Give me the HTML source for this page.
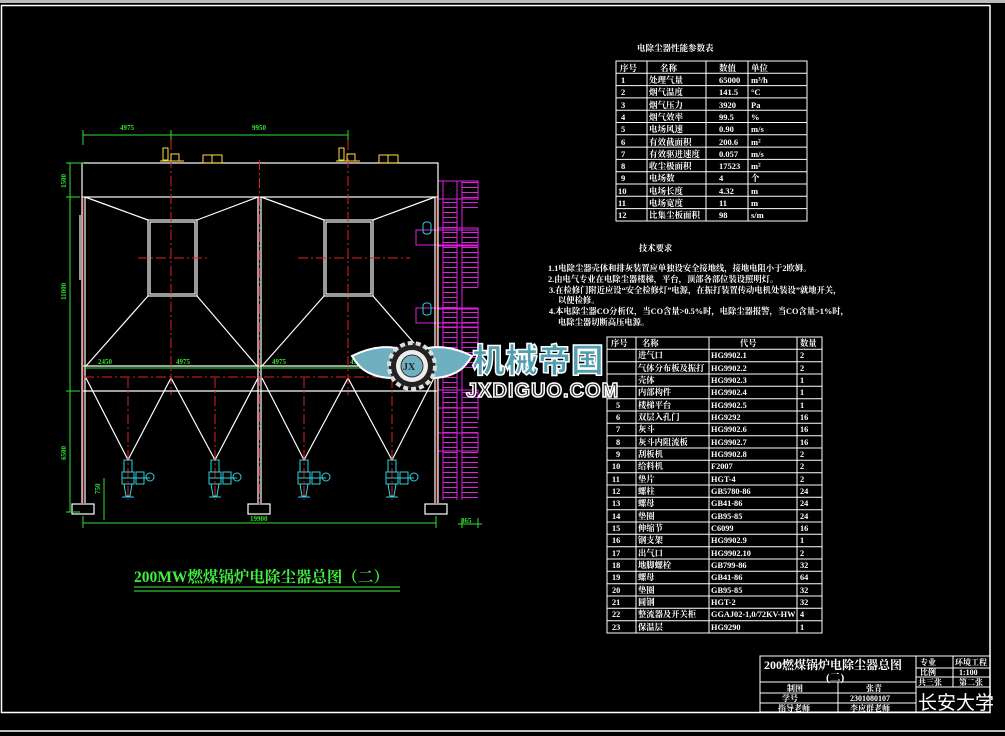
<!DOCTYPE html>
<html><head><meta charset="utf-8"><style>
html,body{margin:0;padding:0;background:#000;width:1005px;height:736px;overflow:hidden}
svg{display:block}
text{font-family:"Liberation Serif","Noto Serif CJK SC",serif;fill:#fff;font-weight:bold}
text.g{fill:#30e030}
text.t{fill:#40f040}
</style></head><body>
<svg width="1005" height="736" viewBox="0 0 1005 736" xmlns="http://www.w3.org/2000/svg">
<defs>
<pattern id="rung" width="20" height="5" patternUnits="userSpaceOnUse"><line x1="0" y1="2.5" x2="20" y2="2.5" stroke="#e020e0" stroke-width="1"/></pattern>
</defs>
<rect x="0" y="0" width="1005" height="3" fill="#bbb"/>
<rect x="1.5" y="5.5" width="988.5" height="707" fill="none" stroke="#fff" stroke-width="1.5"/>
<line x1="0" y1="731" x2="1005" y2="731" stroke="#fff" stroke-width="1.5"/>

<g stroke="#e020e0" stroke-width="1" fill="none">
<rect x="443" y="200" width="14" height="300" fill="url(#rung)" stroke="none"/>
<rect x="462" y="181" width="16" height="30" fill="url(#rung)" stroke="none"/>
<rect x="462" y="228" width="16" height="60" fill="url(#rung)" stroke="none"/>
<rect x="462" y="310" width="16" height="60" fill="url(#rung)" stroke="none"/>
<rect x="462" y="390" width="16" height="110" fill="url(#rung)" stroke="none"/>
<line x1="438" y1="181" x2="438" y2="500"/><line x1="443" y1="181" x2="443" y2="500"/>
<line x1="457" y1="181" x2="457" y2="500"/><line x1="462" y1="181" x2="462" y2="500"/>
<line x1="478" y1="181" x2="478" y2="200"/><line x1="478" y1="228" x2="478" y2="287"/>
<line x1="478" y1="309" x2="478" y2="368"/><line x1="478" y1="390" x2="478" y2="420"/>
<rect x="438" y="181" width="40" height="18"/><rect x="438" y="228" width="40" height="18"/>
<rect x="416" y="230" width="62" height="15"/><rect x="416" y="308" width="62" height="15"/>
<rect x="438" y="309" width="40" height="18"/><rect x="438" y="390" width="40" height="18"/>
<rect x="438" y="433" width="40" height="18"/>
</g>

<g stroke="#fff" stroke-width="1.2" fill="none">
<rect x="82" y="163" width="356" height="34"/>
<line x1="82" y1="197" x2="82" y2="503"/><line x1="85" y1="197" x2="85" y2="503"/>
<line x1="258" y1="197" x2="258" y2="503"/><line x1="261" y1="197" x2="261" y2="503"/>
<line x1="435" y1="197" x2="435" y2="503"/><line x1="438" y1="197" x2="438" y2="503"/>
<line x1="82" y1="366" x2="438" y2="366"/><line x1="82" y1="391" x2="438" y2="391"/>
<rect x="72" y="504" width="22" height="10"/><rect x="248" y="504" width="22" height="10"/><rect x="425" y="504" width="22" height="10"/>
<rect x="148" y="220" width="49" height="76"/><rect x="150" y="222" width="45" height="72"/>
<rect x="324" y="220" width="49" height="76"/><rect x="326" y="222" width="45" height="72"/>
<polyline points="85,197 148,220"/><polyline points="197,220 258,197"/>
<polyline points="261,197 324,220"/><polyline points="373,220 435,197"/>
<polyline points="148,296 86,366"/><polyline points="197,296 257,366"/>
<polyline points="324,296 262,366"/><polyline points="373,296 434,366"/>
<polyline points="86,378 128,460 171,378 215,460 258,378"/>
<polyline points="262,378 304,460 348,378 392,460 434,378"/>
<line x1="80" y1="215" x2="80" y2="280"/>
</g>

<g stroke="#e02020" stroke-width="1" stroke-dasharray="10,3,2,3">
<line x1="171" y1="140" x2="171" y2="395"/><line x1="348" y1="140" x2="348" y2="395"/>
<line x1="259.5" y1="160" x2="259.5" y2="505"/>
<line x1="138" y1="258" x2="210" y2="258"/><line x1="298" y1="258" x2="410" y2="258"/>
<line x1="84" y1="377" x2="436" y2="377"/>
<line x1="128" y1="378" x2="128" y2="500"/><line x1="215" y1="378" x2="215" y2="500"/>
<line x1="304" y1="378" x2="304" y2="500"/><line x1="392" y1="378" x2="392" y2="500"/>
<line x1="83" y1="197" x2="83" y2="505" stroke-dasharray="none" stroke="#f04040" stroke-width="0.8"/>
<line x1="437" y1="197" x2="437" y2="505" stroke-dasharray="none" stroke="#f04040" stroke-width="0.8"/>
</g>

<g stroke="#30d0e0" stroke-width="1" fill="none">
<g id="cv"><rect x="124" y="460" width="8" height="12"/><rect x="122" y="472" width="12" height="12"/><line x1="122" y1="478" x2="150" y2="478"/><rect x="136" y="472" width="8" height="12"/><circle cx="150" cy="477" r="4"/><polyline points="124,484 126,496 130,496 132,484"/><line x1="122" y1="497" x2="134" y2="497"/></g>
<use href="#cv" x="87"/><use href="#cv" x="176"/><use href="#cv" x="264"/>
<rect x="423" y="222" width="8" height="12" rx="3"/><rect x="423" y="303" width="8" height="12" rx="3"/>
</g>

<g stroke="#ffe040" stroke-width="1" fill="none">
<rect x="163" y="148" width="5" height="12"/><rect x="171" y="154" width="8" height="7"/><line x1="160" y1="161" x2="184" y2="161"/>
<rect x="203" y="155" width="19" height="8"/><line x1="212" y1="155" x2="212" y2="163"/>
<rect x="339" y="148" width="5" height="12"/><rect x="347" y="154" width="8" height="7"/><line x1="336" y1="161" x2="360" y2="161"/>
<rect x="379" y="155" width="19" height="8"/><line x1="388" y1="155" x2="388" y2="163"/>
</g>

<g stroke="#30e030" stroke-width="1" fill="none">
<line x1="83" y1="135" x2="348" y2="135"/><line x1="83" y1="130" x2="83" y2="145"/><line x1="171" y1="130" x2="171" y2="140"/><line x1="348" y1="130" x2="348" y2="140"/>
<line x1="70" y1="163" x2="70" y2="512"/><line x1="66" y1="163" x2="84" y2="163"/><line x1="66" y1="197" x2="80" y2="197"/><line x1="66" y1="391" x2="80" y2="391"/><line x1="66" y1="512" x2="80" y2="512"/>
<line x1="83" y1="523" x2="436" y2="523"/><line x1="83" y1="516" x2="83" y2="528"/><line x1="436" y1="516" x2="436" y2="528"/>
<line x1="84" y1="368" x2="436" y2="368"/>
<line x1="104" y1="478" x2="104" y2="520"/>
<line x1="462" y1="518" x2="462" y2="528"/><line x1="478" y1="518" x2="478" y2="528"/><line x1="458" y1="524" x2="482" y2="524"/>
</g>
<g style="font-size:7px">
<text class="g" x="120" y="130">4975</text><text class="g" x="252" y="130">9950</text>
<text class="g" x="250" y="521">19900</text><text class="g" x="461" y="523">865</text>
<text class="g" x="98" y="364">2450</text><text class="g" x="176" y="364">4975</text><text class="g" x="272" y="364">4975</text><text class="g" x="350" y="364">4975</text>
<text class="g" transform="translate(66,188) rotate(-90)">1500</text>
<text class="g" transform="translate(66,300) rotate(-90)">11000</text>
<text class="g" transform="translate(66,460) rotate(-90)">6500</text>
<text class="g" transform="translate(100,494) rotate(-90)">750</text>
</g>

<text class="t" x="134" y="582" style="font-size:15.5px">200MW燃煤锅炉电除尘器总图（二）</text>
<line x1="134" y1="587" x2="400" y2="587" stroke="#40f040"/><line x1="134" y1="591" x2="400" y2="591" stroke="#40f040"/>

<text x="637" y="51" style="font-size:8.5px">电除尘器性能参数表</text>
<g stroke="#fff" stroke-width="1" fill="none">
<rect x="616" y="61" width="191" height="160"/>
<line x1="647" y1="61" x2="647" y2="221"/><line x1="706" y1="61" x2="706" y2="221"/><line x1="748" y1="61" x2="748" y2="221"/>
<line x1="616" y1="73.3" x2="807" y2="73.3"/><line x1="616" y1="85.6" x2="807" y2="85.6"/><line x1="616" y1="97.9" x2="807" y2="97.9"/><line x1="616" y1="110.2" x2="807" y2="110.2"/><line x1="616" y1="122.5" x2="807" y2="122.5"/><line x1="616" y1="134.8" x2="807" y2="134.8"/><line x1="616" y1="147.1" x2="807" y2="147.1"/><line x1="616" y1="159.4" x2="807" y2="159.4"/><line x1="616" y1="171.7" x2="807" y2="171.7"/><line x1="616" y1="184" x2="807" y2="184"/><line x1="616" y1="196.3" x2="807" y2="196.3"/><line x1="616" y1="208.6" x2="807" y2="208.6"/>
</g>
<g style="font-size:8.5px">
<text x="620" y="71">序号</text><text x="660" y="71">名称</text><text x="719" y="71">数值</text><text x="751" y="71">单位</text>
<text x="621" y="83">1</text><text x="649" y="83">处理气量</text><text x="719" y="83">65000</text><text x="751" y="83">m³/h</text>
<text x="621" y="95">2</text><text x="649" y="95">烟气温度</text><text x="719" y="95">141.5</text><text x="751" y="95">°C</text>
<text x="621" y="108">3</text><text x="649" y="108">烟气压力</text><text x="719" y="108">3920</text><text x="751" y="108">Pa</text>
<text x="621" y="120">4</text><text x="649" y="120">烟气效率</text><text x="719" y="120">99.5</text><text x="751" y="120">%</text>
<text x="621" y="132">5</text><text x="649" y="132">电场风速</text><text x="719" y="132">0.90</text><text x="751" y="132">m/s</text>
<text x="621" y="145">6</text><text x="649" y="145">有效截面积</text><text x="719" y="145">200.6</text><text x="751" y="145">m²</text>
<text x="621" y="157">7</text><text x="649" y="157">有效驱进速度</text><text x="719" y="157">0.057</text><text x="751" y="157">m/s</text>
<text x="621" y="169">8</text><text x="649" y="169">收尘极面积</text><text x="719" y="169">17523</text><text x="751" y="169">m²</text>
<text x="621" y="181">9</text><text x="649" y="181">电场数</text><text x="719" y="181">4</text><text x="751" y="181">个</text>
<text x="618" y="194">10</text><text x="649" y="194">电场长度</text><text x="719" y="194">4.32</text><text x="751" y="194">m</text>
<text x="618" y="206">11</text><text x="649" y="206">电场宽度</text><text x="719" y="206">11</text><text x="751" y="206">m</text>
<text x="618" y="218">12</text><text x="649" y="218">比集尘板面积</text><text x="719" y="218">98</text><text x="751" y="218">s/m</text>
</g>

<g style="font-size:8.3px">
<text x="639" y="251">技术要求</text>
<text x="548" y="271">1.1电除尘器壳体和排灰装置应单独设安全接地线，接地电阻小于2欧姆。</text>
<text x="548" y="282">2.由电气专业在电除尘器楼梯，平台，顶部各部位装设照明灯。</text>
<text x="549" y="293">3.在检修门附近应设“安全检修灯”电源，在振打装置传动电机处装设”就地开关，</text>
<text x="558" y="303">以便检修。</text>
<text x="549" y="314">4.本电除尘器CO分析仪，当CO含量&gt;0.5%时，电除尘器报警，当CO含量&gt;1%时，</text>
<text x="558" y="325">电除尘器切断高压电源。</text>
</g>

<g stroke="#fff" stroke-width="1" fill="none">
<rect x="607" y="337" width="215" height="296"/>
<line x1="636" y1="337" x2="636" y2="633"/><line x1="709" y1="337" x2="709" y2="633"/><line x1="797" y1="337" x2="797" y2="633"/>
<path d="M607 349.3H822M607 361.7H822M607 374H822M607 386.3H822M607 398.7H822M607 411H822M607 423.3H822M607 435.7H822M607 448H822M607 460.3H822M607 472.7H822M607 485H822M607 497.3H822M607 509.7H822M607 522H822M607 534.3H822M607 546.7H822M607 559H822M607 571.3H822M607 583.7H822M607 596H822M607 608.3H822M607 620.7H822"/>
</g>
<g style="font-size:8.3px">
<text x="611" y="346">序号</text><text x="642" y="346">名称</text><text x="740" y="346">代号</text><text x="800" y="346">数量</text>
<text x="638" y="358">进气口</text><text x="711" y="358">HG9902.1</text><text x="800" y="358">2</text>
<text x="638" y="371">气体分布板及振打</text><text x="711" y="371">HG9902.2</text><text x="800" y="371">2</text>
<text x="638" y="383">壳体</text><text x="711" y="383">HG9902.3</text><text x="800" y="383">1</text>
<text x="638" y="395">内部构件</text><text x="711" y="395">HG9902.4</text><text x="800" y="395">1</text>
<text x="616" y="408">5</text><text x="638" y="408">楼梯平台</text><text x="711" y="408">HG9902.5</text><text x="800" y="408">1</text>
<text x="616" y="420">6</text><text x="638" y="420">双层入孔门</text><text x="711" y="420">HG9292</text><text x="800" y="420">16</text>
<text x="616" y="432">7</text><text x="638" y="432">灰斗</text><text x="711" y="432">HG9902.6</text><text x="800" y="432">16</text>
<text x="616" y="445">8</text><text x="638" y="445">灰斗内阻流板</text><text x="711" y="445">HG9902.7</text><text x="800" y="445">16</text>
<text x="616" y="457">9</text><text x="638" y="457">刮板机</text><text x="711" y="457">HG9902.8</text><text x="800" y="457">2</text>
<text x="612" y="469">10</text><text x="638" y="469">给料机</text><text x="711" y="469">F2007</text><text x="800" y="469">2</text>
<text x="612" y="482">11</text><text x="638" y="482">垫片</text><text x="711" y="482">HGT-4</text><text x="800" y="482">2</text>
<text x="612" y="494">12</text><text x="638" y="494">螺柱</text><text x="711" y="494">GB5780-86</text><text x="800" y="494">24</text>
<text x="612" y="506">13</text><text x="638" y="506">螺母</text><text x="711" y="506">GB41-86</text><text x="800" y="506">24</text>
<text x="612" y="519">14</text><text x="638" y="519">垫圈</text><text x="711" y="519">GB95-85</text><text x="800" y="519">24</text>
<text x="612" y="531">15</text><text x="638" y="531">伸缩节</text><text x="711" y="531">C6099</text><text x="800" y="531">16</text>
<text x="612" y="543">16</text><text x="638" y="543">钢支架</text><text x="711" y="543">HG9902.9</text><text x="800" y="543">1</text>
<text x="612" y="556">17</text><text x="638" y="556">出气口</text><text x="711" y="556">HG9902.10</text><text x="800" y="556">2</text>
<text x="612" y="568">18</text><text x="638" y="568">地脚螺栓</text><text x="711" y="568">GB799-86</text><text x="800" y="568">32</text>
<text x="612" y="580">19</text><text x="638" y="580">螺母</text><text x="711" y="580">GB41-86</text><text x="800" y="580">64</text>
<text x="612" y="593">20</text><text x="638" y="593">垫圈</text><text x="711" y="593">GB95-85</text><text x="800" y="593">32</text>
<text x="612" y="605">21</text><text x="638" y="605">圆钢</text><text x="711" y="605">HGT-2</text><text x="800" y="605">32</text>
<text x="612" y="617">22</text><text x="638" y="617">整流器及开关柜</text><text x="711" y="617">GGAJ02-1,0/72KV-HW</text><text x="800" y="617">4</text>
<text x="612" y="630">23</text><text x="638" y="630">保温层</text><text x="711" y="630">HG9290</text><text x="800" y="630">1</text>
</g>

<g stroke="#fff" stroke-width="1" fill="none">
<rect x="760" y="656" width="230" height="56"/>
<line x1="916" y1="656" x2="916" y2="712"/><line x1="953" y1="656" x2="953" y2="687"/>
<line x1="760" y1="682" x2="916" y2="682"/><line x1="760" y1="693" x2="916" y2="693"/><line x1="760" y1="703" x2="916" y2="703"/>
<line x1="838" y1="682" x2="838" y2="712"/>
<line x1="916" y1="668" x2="990" y2="668"/><line x1="916" y1="677" x2="990" y2="677"/><line x1="916" y1="687" x2="990" y2="687"/>
</g>
<g style="font-size:8px">
<text x="764" y="669" style="font-size:12px">200燃煤锅炉电除尘器总图</text>
<text x="826" y="681" style="font-size:11px">(二)</text>
<text x="787" y="691">制图</text><text x="866" y="691">张青</text>
<text x="782" y="701">学号</text><text x="850" y="701">2301080107</text>
<text x="778" y="711">指导老师</text><text x="850" y="711">李应群老师</text>
<text x="920" y="665">专业</text><text x="955" y="665">环境工程</text>
<text x="920" y="675">比例</text><text x="959" y="675">1:100</text>
<text x="918" y="685">共三张</text><text x="959" y="685">第二张</text>
</g>
<text x="918" y="709" style="font-size:19px;font-weight:normal;font-family:'Noto Sans CJK SC',sans-serif">长安大学</text>

<!-- watermark -->
<g>
<path d="M352 356 Q380 342 404 350 L410 376 Q382 382 364 370 Q358 366 352 356 Z" fill="#6fb0c0" stroke="#fff" stroke-width="2"/>
<path d="M472 356 Q444 342 420 350 L414 376 Q442 382 460 370 Q466 366 472 356 Z" fill="#6fb0c0" stroke="#fff" stroke-width="2"/>
<circle cx="412" cy="366" r="23" fill="#222" stroke="#ddd" stroke-width="4" stroke-dasharray="5,3"/>
<circle cx="412" cy="366" r="16" fill="#eee"/>
<circle cx="412" cy="366" r="11" fill="#6fb0c0" stroke="#333" stroke-width="1"/>
<text x="403" y="370" style="font-size:10px;fill:#222">JX</text>
<text x="472" y="372" style="font-size:33px;font-family:'Noto Sans CJK SC',sans-serif;font-weight:900;fill:#4f9fb0;stroke:#fff;stroke-width:1.5">机械帝国</text>
<text x="466" y="397" style="font-size:20px;font-family:'Liberation Sans',sans-serif;font-weight:bold;fill:#222;stroke:#fff;stroke-width:1.5;letter-spacing:1px">JXDIGUO.COM</text>
</g>
</svg>
</body></html>
